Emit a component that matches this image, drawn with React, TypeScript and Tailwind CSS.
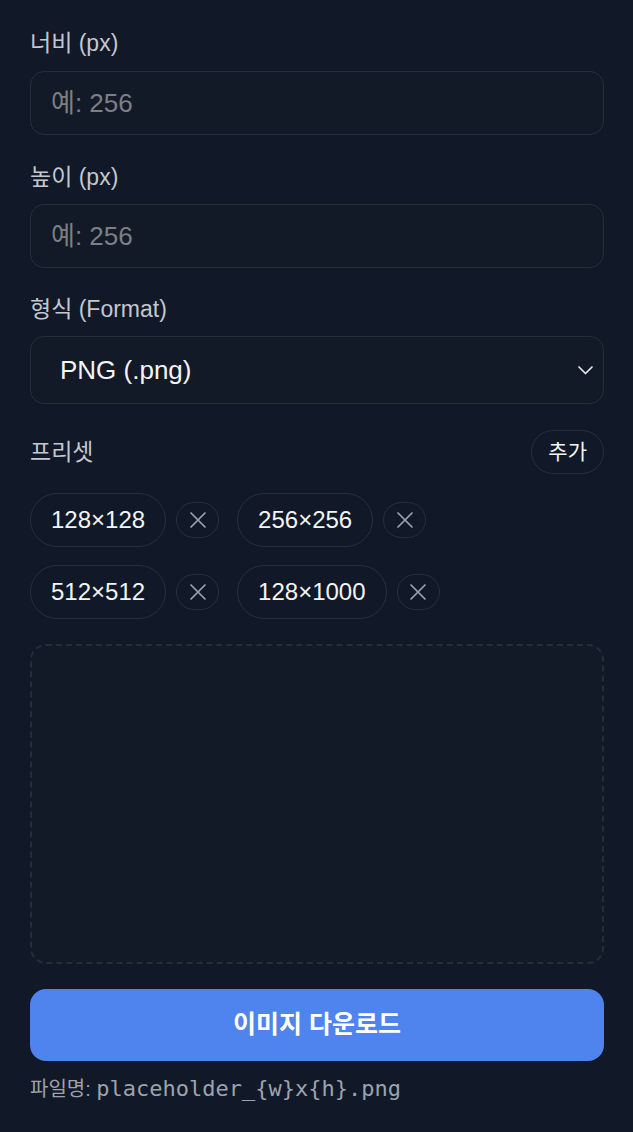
import React, { useState } from "react";

const sans = "font-['Liberation_Sans','Noto_Sans_CJK_KR',sans-serif]";

const XIcon = () => (
  <svg width="24" height="24" viewBox="0 0 24 24" fill="none" stroke="currentColor" strokeWidth="1.7" strokeLinecap="round">
    <path d="M5 5l14 14M19 5L5 19" />
  </svg>
);

const Chip: React.FC<{ label: string }> = ({ label }) => (
  <div className="flex items-center gap-[10px]">
    <button className="h-[54px] px-5 rounded-full border border-[#272e3b] text-[24px] text-[#f3f4f6]">
      {label}
    </button>
    <button className="w-[43px] h-[36px] flex items-center justify-center rounded-full border border-[#272e3b] text-[#9ca3af]">
      <XIcon />
    </button>
  </div>
);

export default function App() {
  const [w, setW] = useState("");
  const [h, setH] = useState("");

  return (
    <div className={`min-h-[1132px] bg-[#111827] pl-[30px] pr-[29px] pt-[29px] ${sans}`}>
      <div className="flex flex-col">
        <label className="text-[23px] leading-[28px] text-[#c3c7ce]">너비 (px)</label>
        <input
          value={w}
          onChange={(e) => setW(e.target.value)}
          placeholder="예: 256"
          className="mt-[14px] h-[64px] px-5 rounded-[14px] bg-[#131a27] border border-[#272e3b] text-[26px] text-[#f3f4f6] placeholder:text-[#7c7f86] outline-none"
        />

        <label className="mt-[28px] text-[23px] leading-[28px] text-[#c3c7ce]">높이 (px)</label>
        <input
          value={h}
          onChange={(e) => setH(e.target.value)}
          placeholder="예: 256"
          className="mt-[13px] h-[64px] px-5 rounded-[14px] bg-[#131a27] border border-[#272e3b] text-[26px] text-[#f3f4f6] placeholder:text-[#7c7f86] outline-none"
        />

        <label className="mt-[27px] text-[23px] leading-[28px] text-[#c3c7ce]">형식 (Format)</label>
        <div className="mt-[13px] h-[68px] pl-[29px] pr-[9px] rounded-[14px] bg-[#131a27] border border-[#272e3b] flex items-center justify-between">
          <span className="text-[26px] text-[#f3f4f6]">PNG (.png)</span>
          <svg width="17" height="10" viewBox="0 0 17 10" fill="none" stroke="#e5e7eb" strokeWidth="1.7" strokeLinecap="round" strokeLinejoin="round">
            <path d="M2 2l6.5 6.5L15 2" />
          </svg>
        </div>

        <div className="mt-[26px] flex items-center justify-between">
          <span className="text-[23px] text-[#c3c7ce]">프리셋</span>
          <button className="h-[44px] px-[16px] rounded-full border border-[#272e3b] text-[21px] text-[#f3f4f6]">
            추가
          </button>
        </div>

        <div className="mt-[19px] flex flex-wrap gap-x-[18px] gap-y-[18px]">
          <Chip label="128×128" />
          <Chip label="256×256" />
          <Chip label="512×512" />
          <Chip label="128×1000" />
        </div>

        <div className="mt-[25px] h-[320px] rounded-[16px] border-2 border-dashed border-[#262d3a] bg-[#131a27]" />

        <button className="mt-[25px] h-[72px] rounded-[16px] bg-[#4f83ee] text-white text-[25px] font-bold">
          이미지 다운로드
        </button>

        <p className="mt-[14px] text-[20px] leading-[28px] text-[#9ca3af]">
          파일명:{" "}
          <span className="font-['DejaVu_Sans_Mono',monospace] text-[22px]">placeholder_{"{w}"}x{"{h}"}.png</span>
        </p>
      </div>
    </div>
  );
}
